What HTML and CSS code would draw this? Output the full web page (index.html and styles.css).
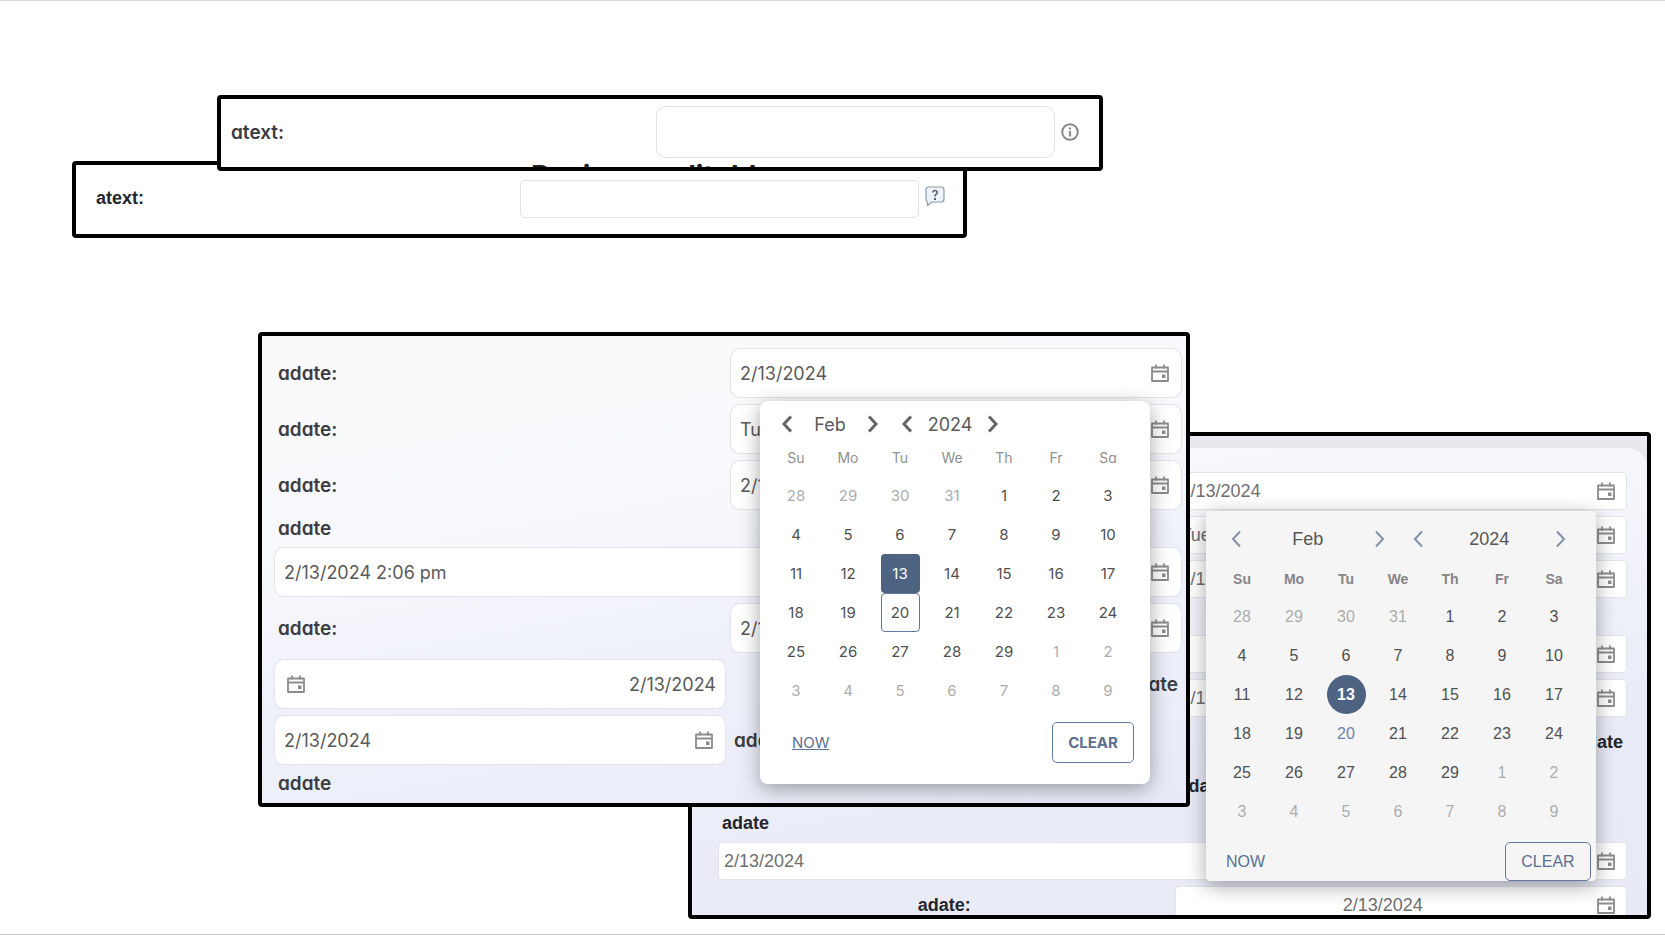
FILE: index.html
```html
<!DOCTYPE html>
<html lang="en">
<head>
  <meta charset="UTF-8">
  <meta name="viewport" content="width=device-width, initial-scale=1.0">
  <title>Form fields</title>
  <link rel="stylesheet" href="styles.css">
</head>
<body>

<svg class="sprite" aria-hidden="true">
  <symbol id="icon-calendar" viewBox="0 0 18 18">
    <path d="M1 3.5h16v13.5h-16z" fill="none" stroke="currentColor" stroke-width="1.8" stroke-linejoin="round"/>
    <path d="M1 7.5h16M5 0.5v4M13 0.5v4" fill="none" stroke="currentColor" stroke-width="1.8"/>
    <rect x="11" y="10.5" width="3.5" height="3.5" fill="currentColor"/>
  </symbol>
  <symbol id="icon-prev" viewBox="0 0 20 20">
    <path d="M14 2.5L7 10l7 7.5" fill="none" stroke="currentColor"/>
  </symbol>
  <symbol id="icon-next" viewBox="0 0 20 20">
    <path d="M6 2.5L13 10l-7 7.5" fill="none" stroke="currentColor"/>
  </symbol>
</svg>

<main class="board">

  <section class="shot classic text-classic">
    <label for="text-classic">atext:</label>
    <input type="text" id="text-classic" class="text-input">
    <svg class="help-icon" viewBox="0 0 20 20" aria-hidden="true">
      <path d="M4 1h12q3 0 3 3v9q0 3-3 3H7l-4.5 3.5V16Q1 15.5 1 13V4q0-3 3-3z" fill="#eef3f8" stroke="#8c99a8" stroke-width="1.2"/>
      <path d="M7.8 6.5Q8 4.5 10 4.5T12.2 6.5Q12.2 7.6 11 8.4T10 10.5" fill="none" stroke="#56616f" stroke-width="1.6"/>
      <rect x="9" y="12" width="2" height="2" fill="#56616f"/>
    </svg>
  </section>

  <section class="shot modern text-modern">
    <div class="text-row">
      <label for="text-modern">atext:</label>
      <input type="text" id="text-modern" class="text-input">
      <svg class="info-icon" viewBox="0 0 18 18" aria-hidden="true">
        <circle cx="9" cy="9" r="7.8" fill="none" stroke="#8a8a8a" stroke-width="2"/>
        <path d="M9 8v5.5M9 4.5v2" stroke="#8a8a8a" stroke-width="2.2"/>
      </svg>
    </div>
    <h2 class="next-title">Basic un-editable</h2>
  </section>

  <section class="shot classic dates-classic">
    <form class="date-form">
      <div class="row">
        <label for="c1">adate:</label>
        <div class="field"><input type="text" id="c1" value="2/13/2024"><svg class="icon"><use href="#icon-calendar"/></svg></div>
      </div>
      <div class="row">
        <label for="c2">adate:</label>
        <div class="field"><input type="text" id="c2" value="Tue"><svg class="icon"><use href="#icon-calendar"/></svg></div>
      </div>
      <div class="row">
        <label for="c3">adate:</label>
        <div class="field"><input type="text" id="c3" value="2/13/2024"><svg class="icon"><use href="#icon-calendar"/></svg></div>
      </div>
      <div class="stacked">
        <label for="c4">adate</label>
        <div class="field"><input type="text" id="c4" value="2/13/2024"><svg class="icon"><use href="#icon-calendar"/></svg></div>
      </div>
      <div class="row">
        <label for="c5">adate:</label>
        <div class="field"><input type="text" id="c5" value="2/13/2024"><svg class="icon"><use href="#icon-calendar"/></svg></div>
      </div>
      <div class="row">
        <div class="field"><input type="text" id="c6" value="2/13/2024"><svg class="icon"><use href="#icon-calendar"/></svg></div>
        <label for="c6" class="end">adate</label>
      </div>
      <div class="row">
        <div class="field"><input type="text" id="c7" value="2/13/2024"><svg class="icon"><use href="#icon-calendar"/></svg></div>
        <label for="c7">adate</label>
      </div>
      <div class="stacked">
        <label for="c8">adate</label>
        <div class="field"><input type="text" id="c8" value="2/13/2024"><svg class="icon"><use href="#icon-calendar"/></svg></div>
      </div>
      <div class="row">
        <label for="c9" class="center">adate:</label>
        <div class="field center"><input type="text" id="c9" value="2/13/2024"><svg class="icon"><use href="#icon-calendar"/></svg></div>
      </div>
    </form>

    <div class="picker">
      <div class="picker-nav">
        <div class="spinner">
          <button type="button" aria-label="Previous month"><svg><use href="#icon-prev"/></svg></button>
          <span>Feb</span>
          <button type="button" aria-label="Next month"><svg><use href="#icon-next"/></svg></button>
        </div>
        <div class="spinner">
          <button type="button" aria-label="Previous year"><svg><use href="#icon-prev"/></svg></button>
          <span>2024</span>
          <button type="button" aria-label="Next year"><svg><use href="#icon-next"/></svg></button>
        </div>
      </div>
      <table class="days"></table>
      <div class="picker-footer">
        <button type="button" class="now">NOW</button>
        <button type="button" class="clear">CLEAR</button>
      </div>
    </div>
  </section>

  <section class="shot modern dates-modern">
    <form class="date-form">
      <div class="row">
        <label for="m1">adate:</label>
        <div class="field"><input type="text" id="m1" value="2/13/2024"><svg class="icon"><use href="#icon-calendar"/></svg></div>
      </div>
      <div class="row">
        <label for="m2">adate:</label>
        <div class="field"><input type="text" id="m2" value="Tue"><svg class="icon"><use href="#icon-calendar"/></svg></div>
      </div>
      <div class="row">
        <label for="m3">adate:</label>
        <div class="field"><input type="text" id="m3" value="2/13/2024"><svg class="icon"><use href="#icon-calendar"/></svg></div>
      </div>
      <div class="stacked">
        <label for="m4">adate</label>
        <div class="field"><input type="text" id="m4" value="2/13/2024 2:06 pm"><svg class="icon"><use href="#icon-calendar"/></svg></div>
      </div>
      <div class="row">
        <label for="m5">adate:</label>
        <div class="field"><input type="text" id="m5" value="2/13/2024"><svg class="icon"><use href="#icon-calendar"/></svg></div>
      </div>
      <div class="row">
        <div class="field reversed"><input type="text" id="m6" value="2/13/2024"><svg class="icon"><use href="#icon-calendar"/></svg></div>
        <label for="m6" class="end">adate</label>
      </div>
      <div class="row">
        <div class="field"><input type="text" id="m7" value="2/13/2024"><svg class="icon"><use href="#icon-calendar"/></svg></div>
        <label for="m7">adate</label>
      </div>
      <div class="stacked">
        <label>adate</label>
      </div>
    </form>

    <div class="picker">
      <div class="picker-nav">
        <div class="spinner">
          <button type="button" aria-label="Previous month"><svg><use href="#icon-prev"/></svg></button>
          <span>Feb</span>
          <button type="button" aria-label="Next month"><svg><use href="#icon-next"/></svg></button>
        </div>
        <div class="spinner">
          <button type="button" aria-label="Previous year"><svg><use href="#icon-prev"/></svg></button>
          <span>2024</span>
          <button type="button" aria-label="Next year"><svg><use href="#icon-next"/></svg></button>
        </div>
      </div>
      <table class="days"></table>
      <div class="picker-footer">
        <button type="button" class="now">NOW</button>
        <button type="button" class="clear">CLEAR</button>
      </div>
    </div>
  </section>

</main>

<script>
  const weekdays = ['Su', 'Mo', 'Tu', 'We', 'Th', 'Fr', 'Sa'];
  const selected = 13;
  const today = 20;

  // six weeks starting on Sunday, January 28
  function buildDays(table) {
    const head = table.createTHead().insertRow();
    weekdays.forEach((name) => {
      const th = document.createElement('th');
      th.textContent = name;
      head.appendChild(th);
    });

    const body = table.createTBody();
    const date = new Date(2024, 0, 28);
    for (let week = 0; week < 6; week++) {
      const row = body.insertRow();
      for (let i = 0; i < 7; i++) {
        const button = document.createElement('button');
        button.type = 'button';
        button.textContent = date.getDate();
        if (date.getMonth() !== 1) {
          button.className = 'other';
        } else if (date.getDate() === selected) {
          button.className = 'selected';
        } else if (date.getDate() === today) {
          button.className = 'today';
        }
        row.insertCell().appendChild(button);
        date.setDate(date.getDate() + 1);
      }
    }
  }

  document.querySelectorAll('.days').forEach(buildDays);
</script>

</body>
</html>
```
FILE: styles.css
```css
* {
  box-sizing: border-box;
}
body {
  margin: 0;
  background: #fff;
}
button,
input {
  font: inherit;
  color: inherit;
}
button {
  padding: 0;
  border: none;
  background: none;
  cursor: pointer;
}
.sprite {
  display: none;
}
.board {
  position: relative;
  min-height: 100vh;
  border-top: 1px solid #d8d8d8;
  border-bottom: 1px solid #c8c8c8;
  overflow: hidden;
}

/* screenshots on the board */
.shot {
  position: absolute;
  border: 4px solid #000;
  border-radius: 4px;
  background: #fff;
  overflow: hidden;
}
.modern {
  font-family: Inter, "Liberation Sans", sans-serif;
  font-feature-settings: "cv11";
  font-size: 18px;
  color: #5a5a5a;
}
.classic {
  font-family: "Liberation Sans", Arial, sans-serif;
  font-size: 18px;
  color: #707070;
}
.shot label {
  font-weight: 600;
  color: #3c3d42;
}
.modern label {
  font-size: 19px;
}
.classic label {
  color: #25262c;
}

/* text fields */
.text-classic {
  left: 72px;
  top: 160px;
  width: 895px;
  height: 77px;
  display: flex;
  align-items: center;
  padding: 0 18px 2px 20px;
}
.text-modern {
  left: 217px;
  top: 94px;
  width: 886px;
  height: 76px;
}
.text-row {
  display: flex;
  align-items: center;
  padding: 7px 20px 7px 10px;
}
.text-input {
  width: 399px;
  height: 38px;
  margin-left: auto;
  border: 1px solid #e2e2e2;
  border-radius: 5px;
  background: #fff;
}
.modern .text-input {
  height: 52px;
  border-radius: 10px;
}
.info-icon {
  width: 18px;
  height: 18px;
  margin-left: 6px;
}
.help-icon {
  width: 20px;
  height: 20px;
  margin: 0 0 6px 6px;
}
.next-title {
  margin: 0;
  padding-left: 310px;
  font-size: 28px;
  line-height: 23px;
  color: #222;
}

/* date forms */
.dates-modern {
  left: 258px;
  top: 331px;
  width: 932px;
  height: 475px;
  background: linear-gradient(170deg, #fafafc 0%, #f8f9fc 35%, #eff1fa 60%, #e8ebf7 100%);
}
.dates-classic {
  left: 688px;
  top: 431px;
  width: 963px;
  height: 487px;
  padding-top: 12px;
  background: #e8e9ee;
}
.date-form {
  display: flex;
  flex-direction: column;
  gap: 6px;
}
.dates-modern .date-form {
  padding: 12px 4px 0 12px;
}
.dates-classic .date-form {
  padding: 24px 20px 0 26px;
  border-top-right-radius: 20px;
  background: linear-gradient(170deg, #fafbfd 0%, #f5f6fb 30%, #e9ecf7 65%, #e8ebf6 100%);
}
.row {
  display: grid;
  grid-template-columns: 1fr 1fr;
  align-items: center;
  gap: 4px;
}
.row label {
  padding: 0 4px;
}
.stacked {
  margin-top: -6px;
}
.stacked label {
  display: block;
  padding-left: 4px;
  line-height: 37px;
}
.shot .end {
  text-align: right;
}
.shot .center,
.center input {
  text-align: center;
}
.field {
  display: flex;
  align-items: center;
  height: 38px;
  padding: 0 11px 0 5px;
  border: 1px solid #e3e4e9;
  border-radius: 4px;
  background: #fff;
}
.modern .field {
  height: 50px;
  padding: 0 12px 0 9px;
  border-radius: 10px;
}
.modern .reversed {
  flex-direction: row-reverse;
  padding: 0 9px 0 12px;
}
.reversed input {
  text-align: right;
}
.field input {
  flex: 1;
  min-width: 0;
  padding: 0;
  border: none;
  background: none;
}
.field .icon {
  width: 18px;
  height: 18px;
  margin-left: 12px;
  color: #8c8c8c;
}
.reversed .icon {
  margin: 0;
}

/* date picker */
.picker {
  position: absolute;
  width: 390px;
  box-shadow: 0 5px 20px rgba(0, 0, 0, 0.35);
}
.dates-modern .picker {
  left: 498px;
  top: 65px;
  padding: 9px 16px 21px 10px;
  border-radius: 8px;
  background: #fff;
}
.dates-classic .picker {
  left: 514px;
  top: 75px;
  padding: 14px 16px 0 10px;
  border-radius: 4px;
  background: #f5f5f5;
}
.picker-nav {
  display: flex;
  gap: 14px;
  height: 28px;
  padding-left: 7px;
}
.classic .picker-nav {
  gap: 18px;
  height: 35px;
  padding: 0 9px 7px 10px;
}
.spinner {
  display: flex;
  align-items: center;
}
.classic .spinner {
  flex: 1;
}
.spinner span {
  width: 66px;
  text-align: center;
}
.classic .spinner span {
  flex: 1;
  color: #555;
}
.spinner button {
  width: 20px;
  height: 20px;
}
.spinner svg {
  display: block;
  width: 20px;
  height: 20px;
  stroke-width: 3px;
  color: #666;
}
.classic .spinner svg {
  stroke-width: 2px;
  color: #8293ab;
}
.days {
  width: 100%;
  table-layout: fixed;
  border-collapse: collapse;
  font-size: 15px;
}
.classic .days {
  font-size: 16px;
}
.days th {
  height: 38px;
  padding: 0;
  font-size: 14px;
  font-weight: 400;
  color: #909090;
}
.classic .days th {
  height: 37px;
  font-weight: 700;
  color: #858585;
}
.days td {
  height: 39px;
  padding: 0;
  text-align: center;
}
.days button {
  display: block;
  width: 39px;
  height: 39px;
  margin: 0 auto;
  border-radius: 4px;
  color: #505050;
}
.days .other {
  color: #adadad;
}
.days .selected {
  background: #4e6382;
  color: #fff;
}
.classic .days .selected {
  border-radius: 50%;
  font-weight: 700;
}
.modern .days .today {
  border: 1px solid #6478a0;
}
.classic .days .today {
  color: #6f84a8;
}
.picker-footer {
  display: flex;
  justify-content: space-between;
  align-items: center;
  padding: 12px 0 0 22px;
  font-size: 15px;
  color: #5b6f91;
}
.classic .picker-footer {
  margin-right: -11px;
  padding: 11px 0 0 10px;
  font-size: 16px;
}
.modern .now {
  text-decoration: underline;
}
.clear {
  width: 82px;
  height: 41px;
  border: 1px solid #6478a0;
  border-radius: 5px;
}
.modern .clear {
  font-weight: 700;
}
.classic .clear {
  width: 86px;
  height: 39px;
}
```
